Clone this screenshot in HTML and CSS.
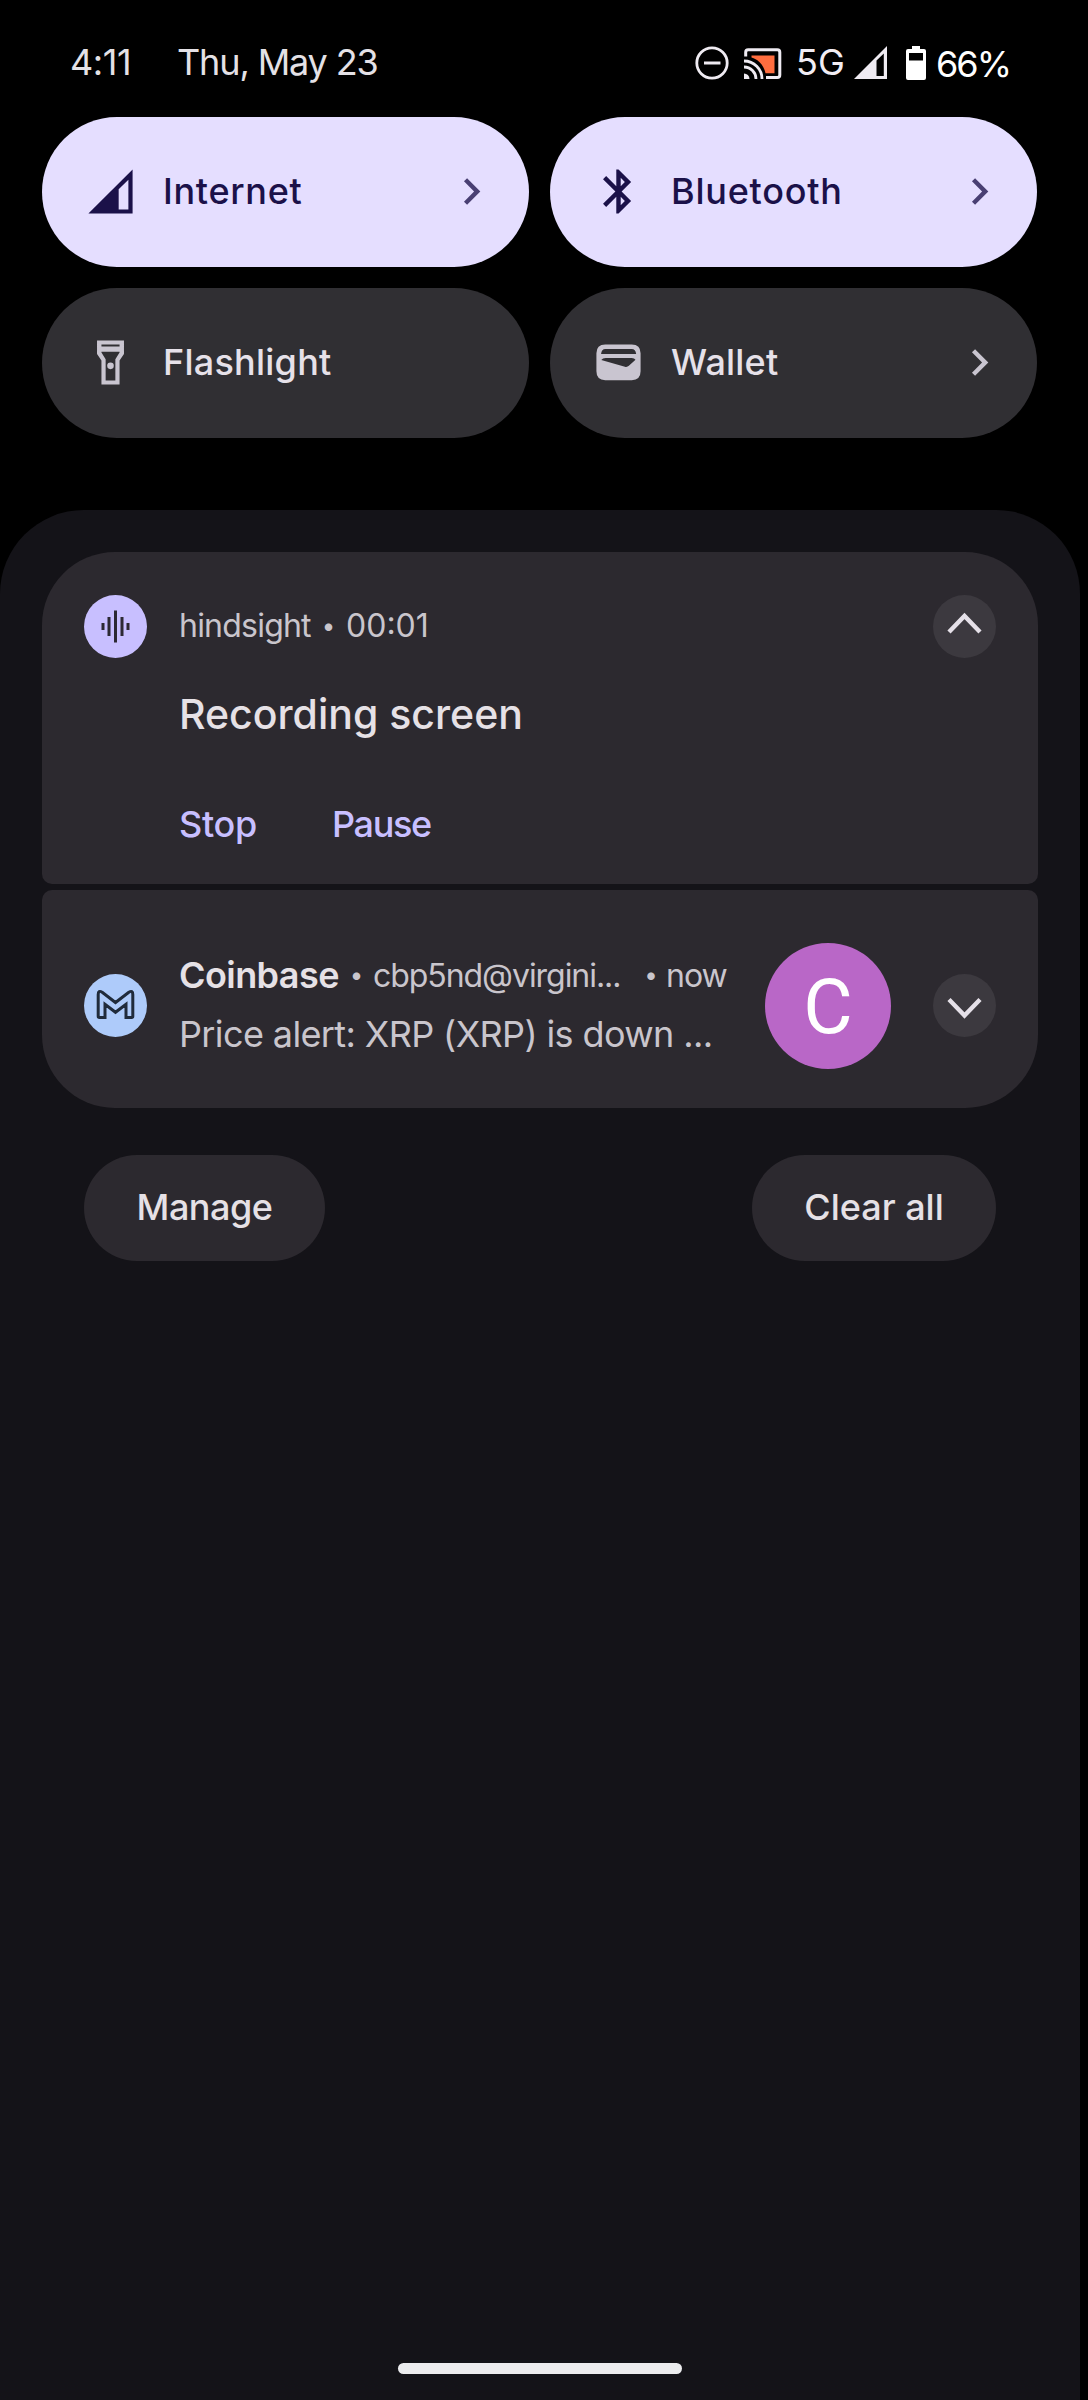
FILE: index.html
```html
<!DOCTYPE html>
<html lang="en">
<head>
<meta charset="utf-8">
<title>Notification shade</title>
<link rel="stylesheet" href="styles.css">
</head>
<body>
<div class="screen">
  <header class="status">
    <span class="clock">4:11</span>
    <span class="date">Thu, May 23</span>
    <div class="status-icons">
      <svg class="dnd" width="34" height="34" viewBox="0 0 34 34"><circle cx="17" cy="17" r="15.2" fill="none" stroke="#efebf2" stroke-width="2.8"/><path d="M9 17h16.5" stroke="#efebf2" stroke-width="3"/></svg>
      <svg class="cast" width="38" height="32" viewBox="0 0 38 32">
        <path d="M7.5 7.5H30.5V25.3H21.5C20 18 15 11.5 7.5 9.5z" fill="#ff6d3f"/>
        <path d="M1.7 8.5V4.2Q1.7 1.8 4.2 1.8H33.3Q35.8 1.8 35.8 4.2V27Q35.8 29.4 33.3 29.4H22" fill="none" stroke="#efebf2" stroke-width="3"/>
        <path d="M0 13A18 18 0 0 1 18 31M0 19A12 12 0 0 1 12 31" fill="none" stroke="#efebf2" stroke-width="2.8"/>
        <path d="M0 25.5A5.5 5.5 0 0 1 5.5 31H0z" fill="#efebf2"/>
      </svg>
      <span class="net">5G</span>
      <svg class="sig" width="33" height="33" viewBox="0 0 33 33"><path fill="#efebf2" fill-rule="evenodd" d="M0 33L33 0V33zM22.5 14.5V30H29.8V7.5z"/></svg>
      <svg class="batt" width="20" height="34" viewBox="0 0 20 34"><path fill="#fff" fill-rule="evenodd" d="M6 0H14V3H18Q20 3 20 5V32Q20 34 18 34H2Q0 34 0 32V5Q0 3 2 3H6zM3 7V14.5H17V7z"/></svg>
      <span class="pct">66%</span>
    </div>
  </header>

  <section class="tiles">
    <div class="tile on">
      <svg class="ic" viewBox="0 0 24 24"><path fill-rule="evenodd" d="M2 22L22 2V22zM15.7 11V20.1H20.1V6.7z"/></svg>
      <span class="internet">Internet</span>
      <svg class="ic chev" viewBox="0 0 24 24"><path d="M10 6L8.59 7.41 13.17 12l-4.58 4.59L10 18l6-6z"/></svg>
    </div>
    <div class="tile on">
      <svg class="ic" viewBox="0 0 24 24"><path d="M17.71 7.71L12 2h-1v7.59L6.41 5 5 6.41 10.59 12 5 17.59 6.41 19 11 14.41V22h1l5.71-5.71-4.3-4.29 4.3-4.29zM13 5.83l1.88 1.88L13 9.59V5.83zm1.88 10.46L13 18.17v-3.76l1.88 1.88z"/></svg>
      <span class="bluetooth">Bluetooth</span>
      <svg class="ic chev" viewBox="0 0 24 24"><path d="M10 6L8.59 7.41 13.17 12l-4.58 4.59L10 18l6-6z"/></svg>
    </div>
    <div class="tile">
      <svg class="ic" viewBox="0 0 24 24"><path fill-rule="evenodd" d="M5.9 2H18.1V8.1L16.1 11.1V22H7.9V11.1L5.9 8.1zM7.9 3.8V4.7H16.1V3.8zM7.9 7.1V7.5L9.8 10.5V20.1H14.2V10.5L16.1 7.5V7.1z"/><circle cx="12" cy="13.5" r="1.5"/></svg>
      <span class="flash">Flashlight</span>
    </div>
    <div class="tile">
      <svg class="ic" viewBox="0 0 24 24"><path fill-rule="evenodd" d="M6 3.8H18Q22 3.8 22 7.8V16Q22 20 18 20H6Q2 20 2 16V7.8Q2 3.8 6 3.8zM4.1 8.1H20Q19.7 5.9 18 5.9H6Q4.4 5.9 4.1 8.1zM4.2 10.9Q4.8 10 6.2 10H18Q19.2 10 19.7 10.7L16.7 13.5Q15.9 14.2 14.9 13.9z"/></svg>
      <span class="wallet">Wallet</span>
      <svg class="ic chev" viewBox="0 0 24 24"><path d="M10 6L8.59 7.41 13.17 12l-4.58 4.59L10 18l6-6z"/></svg>
    </div>
  </section>

  <main class="panel">
    <article class="card recording">
      <svg class="badge" viewBox="0 0 63 63"><circle cx="31.5" cy="31.5" r="31.5" fill="#c8bfff"/><path d="M19 28v7M25 22v19M31.5 15.5v32M38 22v19M44 28v7" stroke="#2c2933" stroke-width="3" /></svg>
      <div class="body">
        <div class="meta"><span class="app">hindsight</span><span class="dot">•</span><span class="time">00:01</span></div>
        <div class="title">Recording screen</div>
        <div class="actions"><span class="stop">Stop</span><span class="pause">Pause</span></div>
      </div>
      <svg class="badge" viewBox="0 0 63 63"><circle cx="31.5" cy="31.5" r="31.5" fill="#3c393f"/><path d="M16 37L31.5 21L47 37" fill="none" stroke="#e5e0e8" stroke-width="4.4"/></svg>
    </article>

    <article class="card mail">
      <svg class="badge" viewBox="0 0 63 63"><circle cx="31.5" cy="31.5" r="31.5" fill="#aecbfa"/><path d="M14.2 42.3V20.5Q14.2 15.8 18.2 18.2L31.5 28.5L44.8 18.2Q48.8 15.8 48.8 20.5V42.3Q48.8 43.5 47.6 43.5H42V30.3L31.5 38.3L21 30.3V43.5H15.4Q14.2 43.5 14.2 42.3z" fill="none" stroke="#202b3b" stroke-width="3"/></svg>
      <div class="lines">
        <div class="from"><span class="sender">Coinbase</span><span class="dot">•</span><span class="account">cbp5nd@virgini...</span><span class="dot">•</span><span class="now">now</span></div>
        <div class="subject">Price alert: XRP (XRP) is down ...</div>
      </div>
      <div class="avatar">C</div>
      <svg class="badge" viewBox="0 0 63 63"><circle cx="31.5" cy="31.5" r="31.5" fill="#3c393f"/><path d="M16 25.5L31.5 41.5L47 25.5" fill="none" stroke="#e5e0e8" stroke-width="4.4"/></svg>
    </article>

    <footer class="buttons">
      <div class="btn manage">Manage</div>
      <div class="btn clear">Clear all</div>
    </footer>

    <div class="home-bar"></div>
  </main>
</div>
</body>
</html>
```
FILE: styles.css
```css
* { box-sizing: border-box; }
body { margin: 0; background: #000; font-family: Inter, "Liberation Sans", sans-serif; }
svg { display: block; flex: none; }
.screen { width: 1088px; height: 2400px; display: flex; flex-direction: column; white-space: nowrap; }

/* Status bar */
.status { height: 117px; padding: 40px 77px 0 70px; display: flex; align-items: flex-start; font-size: 36px; line-height: 44px; color: #e4e1e6; }
.clock { width: 107px; letter-spacing: -0.4px; }
.date { letter-spacing: -1.13px; }
.status-icons { margin-left: auto; display: flex; color: #f1edf4; }
.dnd { margin: 6px 15px 0 0; }
.cast { margin: 8px 14px 0 0; }
.net { width: 58px; }
.sig { margin: 6px 19px 0 0; }
.batt { margin: 6px 10px 0 0; }
.pct { width: 75px; color: #fff; letter-spacing: -2px; margin-top: 2px; }

/* Quick settings */
.tiles { padding: 0 51px 0 42px; display: grid; grid-template-columns: 487px 487px; gap: 21px; grid-auto-rows: 150px; margin-bottom: 72px; }
.tile { border-radius: 75px; background: #302f33; color: #e6e1e9; fill: #c9c5d0; display: flex; align-items: center; padding: 0 31px 1px 42px; gap: 26px; font-size: 36px; line-height: 44px; font-weight: 500; }
.tile span { padding-bottom: 2px; }
.tile.on { background: #e5deff; color: #1b1149; fill: #1b1149; }
.ic { width: 53px; height: 53px; }
.chev { margin-left: auto; }
.on .chev { fill: #493f73; }
.internet { letter-spacing: 0.69px; }
.bluetooth { letter-spacing: 0.76px; }
.flash { letter-spacing: 0.24px; }
.wallet { letter-spacing: 0.2px; }

/* Notifications */
.panel { width: 1080px; flex: 1; background: #141318; border-radius: 84px 84px 0 0; padding: 42px 42px 26px; display: flex; flex-direction: column; }
.card { width: 996px; background: #2c292f; display: flex; padding: 0 42px; color: #c9c5cc; }
.badge { width: 63px; height: 63px; }
.dot { text-align: center; font-size: 24px; }

.recording { height: 332px; border-radius: 73px 73px 10px 10px; padding-top: 43px; }
.body { flex: 1; padding-left: 32px; }
.meta { display: flex; font-size: 32px; line-height: 61px; }
.app { width: 132px; letter-spacing: -0.78px; }
.meta .dot { width: 35px; }
.title { margin-top: 33px; font-size: 41px; line-height: 50px; font-weight: 500; color: #e6e1e6; }
.actions { margin-top: 63px; display: flex; font-size: 36px; line-height: 44px; font-weight: 500; color: #c8bfff; }
.stop { width: 153px; letter-spacing: -0.3px; }
.pause { letter-spacing: -1.36px; }

.mail { height: 218px; margin-top: 6px; border-radius: 10px 10px 73px 73px; padding-top: 13px; align-items: center; }
.lines { width: 618px; padding: 0 0 5px 32px; font-size: 32px; }
.from { display: grid; grid-template-columns: 161px 33px 263px 30px auto; align-items: center; line-height: 60px; }
.from .account, .from .now { padding-top: 2px; }
.sender { font-size: 36px; font-weight: 600; letter-spacing: -0.57px; color: #e6e1e6; }
.account { letter-spacing: -1.05px; }
.now { letter-spacing: -1px; }
.subject { font-size: 36px; line-height: 56px; letter-spacing: -0.62px; }
.avatar { width: 126px; height: 126px; margin-right: 42px; border-radius: 50%; background: #b967c7; color: #fff; font: 76px/128px Roboto, sans-serif; text-align: center; }

.buttons { margin-top: 47px; padding: 0 42px; display: flex; justify-content: space-between; }
.btn { height: 106px; border-radius: 53px; background: #2c292f; color: #e6e1e6; font-size: 36px; line-height: 104px; font-weight: 500; text-align: center; }
.manage { width: 241px; letter-spacing: -0.5px; }
.clear { width: 244px; }

.home-bar { width: 284px; height: 11px; margin: auto auto 0; border-radius: 6px; background: #ececee; }
```
